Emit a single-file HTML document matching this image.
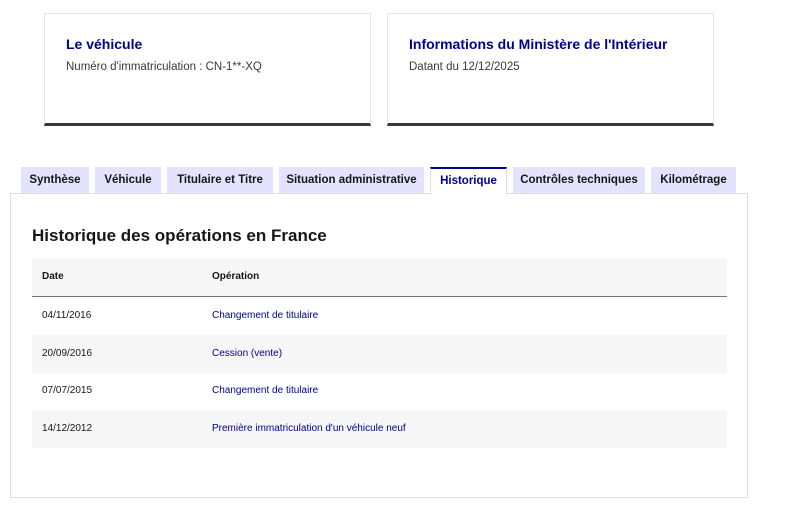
<!DOCTYPE html>
<html><head><meta charset="utf-8"><style>
*{box-sizing:border-box;margin:0;padding:0}
body{width:800px;height:515px;background:#fff;font-family:"Liberation Sans",sans-serif;color:#161616;position:relative;overflow:hidden}
.card{position:absolute;top:13px;height:113px;border:1px solid #e5e5e5;border-bottom:3px solid #3a3a3a;background:#fff}
.card h3{position:absolute;left:21px;top:22px;font-size:14px;font-weight:bold;color:#000091}
.card p{position:absolute;left:21px;top:47px;font-size:11.5px;color:#3a3a3a}
.tab{position:absolute;top:167px;height:26px;background:#e3e3fd;font-size:11.5px;font-weight:bold;color:#161616;text-align:center;line-height:27px}
.tab.act{background:#fff;border-top:2px solid #000091;color:#000091;line-height:24px;border-left:1px solid #ddd;border-right:1px solid #ddd;height:27px;z-index:2}
.panel{position:absolute;left:10px;top:193px;width:738px;height:305px;border:1px solid #ddd}
h2{position:absolute;left:32px;top:226px;font-size:17px;font-weight:bold;color:#161616}
.row{position:absolute;left:32px;width:695px;font-size:10px;line-height:38px;height:38px}
.row span{position:absolute;left:10px}
.row span+span{left:180px}
.g{background:#f6f6f6}
a{color:#000091;text-decoration:none}
</style></head><body>
<div class="card" style="left:44px;width:327px"><h3>Le véhicule</h3><p>Numéro d'immatriculation : CN-1**-XQ</p></div>
<div class="card" style="left:387px;width:327px"><h3>Informations du Ministère de l'Intérieur</h3><p>Datant du 12/12/2025</p></div>
<div class="panel"></div>
<div class="tab" style="left:21px;width:68px">Synthèse</div>
<div class="tab" style="left:95px;width:66px">Véhicule</div>
<div class="tab" style="left:167px;width:106px">Titulaire et Titre</div>
<div class="tab" style="left:279px;width:145px">Situation administrative</div>
<div class="tab act" style="left:430px;width:77px">Historique</div>
<div class="tab" style="left:513px;width:132px">Contrôles techniques</div>
<div class="tab" style="left:651px;width:85px">Kilométrage</div>
<h2>Historique des opérations en France</h2>
<div class="row g" style="top:258px;height:39px;border-bottom:1px solid #777;font-weight:bold;line-height:37px"><span>Date</span><span>Opération</span></div>
<div class="row" style="top:297px"><span>04/11/2016</span><span><a>Changement de titulaire</a></span></div>
<div class="row g" style="top:335px"><span>20/09/2016</span><span><a>Cession (vente)</a></span></div>
<div class="row" style="top:372px"><span>07/07/2015</span><span><a>Changement de titulaire</a></span></div>
<div class="row g" style="top:410px"><span>14/12/2012</span><span><a>Première immatriculation d'un véhicule neuf</a></span></div>
</body></html>
